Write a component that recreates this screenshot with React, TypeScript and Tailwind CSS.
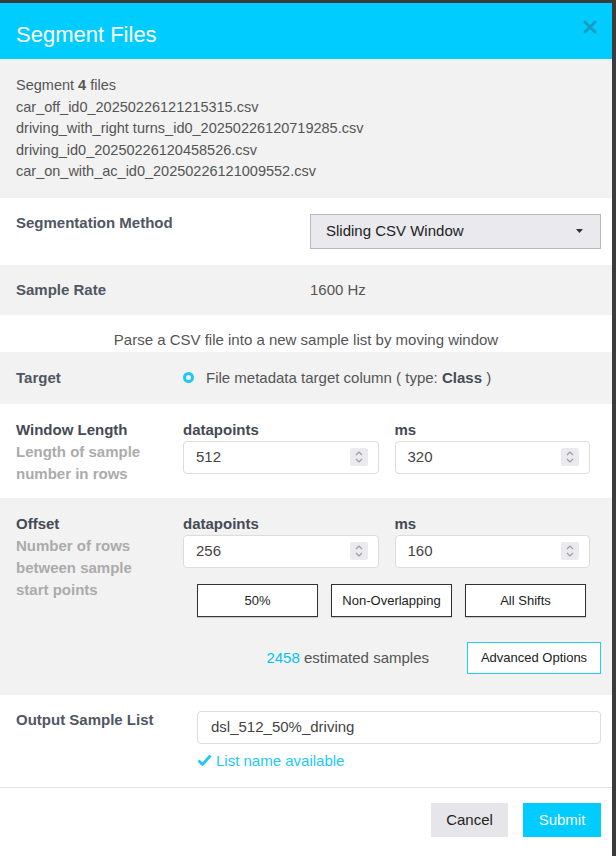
function Spinner() {
  return (
    <span className="flex h-[18px] w-[18px] items-center justify-center rounded-[2px] bg-[#ebebef]">
      <svg width="10" height="14" viewBox="0 0 10 14" fill="none" stroke="#9a9aa2" strokeWidth="1.2">
        <path d="M2 5 L5 2 L8 5" />
        <path d="M2 9 L5 12 L8 9" />
      </svg>
    </span>
  );
}

function NumberField({ value }: { value: string }) {
  return (
    <div className="flex h-[33px] items-center justify-between rounded-[4px] border border-[#dcdcdc] bg-white pl-[12px] pr-[10px] text-[15px] text-[#444]">
      <span>{value}</span>
      <Spinner />
    </div>
  );
}

function Fields({ dp, ms }: { dp: string; ms: string }) {
  return (
    <div className="grid w-[407px] grid-cols-2 gap-x-[16px]">
      <div>
        <div className="text-[15px] font-bold leading-[22px] text-[#454a55]">datapoints</div>
        <NumberField value={dp} />
      </div>
      <div>
        <div className="text-[15px] font-bold leading-[22px] text-[#454a55]">ms</div>
        <NumberField value={ms} />
      </div>
    </div>
  );
}

export default function App() {
  return (
    <div className="h-[856px] w-[616px] overflow-hidden bg-[#3c3c3c] pt-[3px] font-[family-name:Liberation_Sans,Arial,sans-serif]">
      <div className="h-full w-[612px] bg-white">
        <div className="flex h-[56px] items-start justify-between bg-[#00ccff] pl-4 pr-[15px]">
          <h1 className="mt-[19px] text-[22px] leading-[26px] text-white">Segment Files</h1>
          <button type="button" className="mt-[17px]" aria-label="close">
            <svg width="14" height="14" viewBox="0 0 14 14" stroke="#1a9dc2" strokeWidth="3" strokeLinecap="round">
              <path d="M2 2 L12 12 M12 2 L2 12" />
            </svg>
          </button>
        </div>

        <div className="bg-[#f2f2f2] px-4 pb-[15px] pt-[16px] text-[14.5px] leading-[21.6px] text-[#555]">
          <div>
            Segment <span className="font-bold">4</span> files
          </div>
          <div>car_off_id0_20250226121215315.csv</div>
          <div>driving_with_right turns_id0_20250226120719285.csv</div>
          <div>driving_id0_20250226120458526.csv</div>
          <div>car_on_with_ac_id0_20250226121009552.csv</div>
        </div>

        <div className="flex items-start py-4 pl-4 pr-[11px]">
          <div className="w-[294px] text-[15px] font-bold leading-[18px] text-[#505662]">Segmentation Method</div>
          <div className="flex h-[35px] flex-1 items-center justify-between border border-[#b8b8b8] bg-[#e9e9ee] pl-[15px] pr-[17px] text-[15px] text-[#222]">
            <span>Sliding CSV Window</span>
            <svg width="7" height="4" viewBox="0 0 7 4">
              <path d="M0 0 L7 0 L3.5 4 Z" fill="#333" />
            </svg>
          </div>
        </div>

        <div className="flex h-[50px] items-center bg-[#f2f2f2] pl-4 pr-[11px] text-[15px]">
          <div className="w-[294px] font-bold text-[#505662]">Sample Rate</div>
          <div className="text-[#555]">1600 Hz</div>
        </div>

        <div className="h-[37px] pt-[15px] text-center text-[15px] leading-[20px] text-[#555]">
          Parse a CSV file into a new sample list by moving window
        </div>

        <div className="flex h-[52px] items-center bg-[#f2f2f2] pl-4 pr-[11px] text-[15px]">
          <div className="w-[167px] font-bold text-[#505662]">Target</div>
          <span className="h-[11px] w-[11px] rounded-full border-[3px] border-[#1ec8f5]" />
          <span className="ml-[12px] text-[#555]">
            File metadata target column ( type: <span className="font-bold text-[#454a55]">Class</span> )
          </span>
        </div>

        <div className="flex items-start pb-[13px] pl-4 pr-[11px] pt-[15px]">
          <div className="w-[167px] text-[15px] font-bold leading-[22px]">
            <div className="text-[#454a55]">Window Length</div>
            <div className="text-[#ababab]">Length of sample</div>
            <div className="text-[#ababab]">number in rows</div>
          </div>
          <Fields dp="512" ms="320" />
        </div>

        <div className="bg-[#f2f2f2] pb-[21px] pl-4 pr-[11px] pt-[15px]">
          <div className="flex items-start">
            <div className="w-[167px] text-[15px] font-bold leading-[22px]">
              <div className="text-[#454a55]">Offset</div>
              <div className="text-[#ababab]">Number of rows</div>
              <div className="text-[#ababab]">between sample</div>
              <div className="text-[#ababab]">start points</div>
            </div>
            <div>
              <Fields dp="256" ms="160" />
              <div className="ml-[14px] mt-[16px] grid w-[389px] grid-cols-3 gap-x-[13px]">
                {["50%", "Non-Overlapping", "All Shifts"].map((b) => (
                  <button
                    key={b}
                    type="button"
                    className="h-[33px] border-[1.5px] border-[#333] bg-white text-[13px] text-[#222] shadow-[0_1px_1px_rgba(0,0,0,0.15)]"
                  >
                    {b}
                  </button>
                ))}
              </div>
            </div>
          </div>
          <div className="mt-[25px] flex items-center justify-end gap-[38px]">
            <span className="text-[15px] text-[#555]">
              <span className="text-[#00c2f2]">2458</span> estimated samples
            </span>
            <button
              type="button"
              className="h-[32px] w-[134px] border-[1.5px] border-[#22cdf5] bg-white text-[13px] text-[#222]"
            >
              Advanced Options
            </button>
          </div>
        </div>

        <div className="flex items-start border-b border-[#e3e3e3] pb-[16px] pl-4 pr-[11px] pt-[16px]">
          <div className="w-[181px] text-[15px] font-bold leading-[18px] text-[#505662]">Output Sample List</div>
          <div className="flex-1">
            <div className="flex h-[33px] items-center rounded-[4px] border border-[#dcdcdc] bg-white pl-[13px] text-[15px] text-[#444]">
              dsl_512_50%_driving
            </div>
            <div className="mt-[7px] flex items-center gap-[4px] text-[15px] leading-[20px] text-[#1ec8f5]">
              <svg width="15" height="13" viewBox="0 0 15 13" fill="none" stroke="#1ec8f5" strokeWidth="2.8" strokeLinejoin="round">
                <path d="M1.5 6.5 L5.5 10.5 L13.5 1.5" />
              </svg>
              <span>List name available</span>
            </div>
          </div>
        </div>

        <div className="flex justify-end gap-[15px] pr-[11px] pt-[15px]">
          <button type="button" className="h-[34px] w-[77px] bg-[#e6e6ea] text-[15px] text-[#222]">
            Cancel
          </button>
          <button type="button" className="h-[34px] w-[78px] bg-[#00ccff] text-[15px] text-white">
            Submit
          </button>
        </div>
      </div>
    </div>
  );
}
